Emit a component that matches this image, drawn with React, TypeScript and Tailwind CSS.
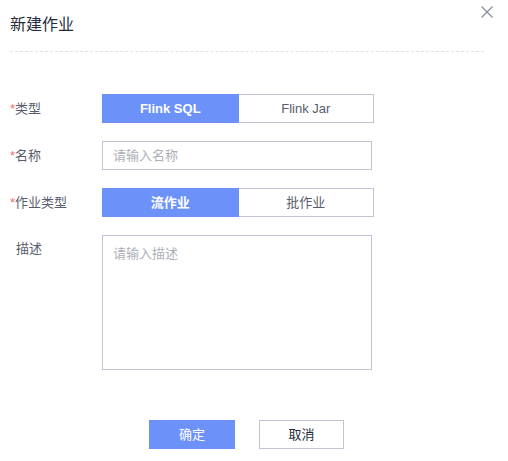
import { useState } from 'react';

const font = { fontFamily: '"Liberation Sans", "Noto Sans CJK SC", sans-serif' };

function Segmented({ options, value, onChange }: { options: string[]; value: string; onChange: (v: string) => void }) {
  return (
    <div className="flex w-[272px] h-[29px]">
      {options.map((opt, i) => {
        const active = opt === value;
        return (
          <button
            key={opt}
            onClick={() => onChange(opt)}
            className={`flex-1 flex items-center justify-center text-[13px] border ${
              active
                ? 'bg-[#6c92fa] border-[#6c92fa] text-white font-semibold'
                : 'bg-white border-[#c0c4d6] text-[#575d6c]'
            } ${i === 0 ? '' : 'border-l-0'}`}
          >
            {opt}
          </button>
        );
      })}
    </div>
  );
}

function Label({ text, required = true }: { text: string; required?: boolean }) {
  return (
    <div className="w-[92px] shrink-0 text-[13px] text-[#575d6c]">
      {required ? <span className="text-[#f66f6a]">*</span> : <span className="inline-block w-[6px]" />}
      {text}
    </div>
  );
}

export default function App() {
  const [kind, setKind] = useState('Flink SQL');
  const [jobType, setJobType] = useState('流作业');

  return (
    <div className="relative w-[508px] h-[461px] bg-white" style={font}>
      <button className="absolute left-[480px] top-[5px] w-[14px] h-[14px]" aria-label="close">
        <svg viewBox="0 0 14 14" width="14" height="14" stroke="#8a8e99" strokeWidth="1.3">
          <line x1="1.5" y1="1.5" x2="12.5" y2="12.5" />
          <line x1="12.5" y1="1.5" x2="1.5" y2="12.5" />
        </svg>
      </button>

      <div className="px-[10px]">
        <div className="pt-[13px] h-[52px] w-[474px] border-b border-dashed border-[#dfe1e6] text-[16px] text-[#252b3a]">
          新建作业
        </div>

        <div className="flex flex-col gap-[18px] pt-[42px]">
          <div className="flex items-center">
            <Label text="类型" />
            <Segmented options={['Flink SQL', 'Flink Jar']} value={kind} onChange={setKind} />
          </div>
          <div className="flex items-center">
            <Label text="名称" />
            <input
              placeholder="请输入名称"
              className="w-[270px] h-[29px] border border-[#c0c4d6] px-[10px] text-[13px] text-[#252b3a] placeholder:text-[#adb0b8] outline-none"
            />
          </div>
          <div className="flex items-center">
            <Label text="作业类型" />
            <Segmented options={['流作业', '批作业']} value={jobType} onChange={setJobType} />
          </div>
          <div className="flex items-start">
            <div className="pt-[4px]">
              <Label text="描述" required={false} />
            </div>
            <textarea
              placeholder="请输入描述"
              className="w-[270px] h-[135px] border border-[#c0c4d6] px-[10px] py-[8px] text-[13px] text-[#252b3a] placeholder:text-[#adb0b8] outline-none resize-none"
            />
          </div>
        </div>

        <div className="flex gap-[24px] pl-[139px] pt-[50px]">
          <button className="w-[86px] h-[29px] bg-[#6c92fa] text-white text-[13px]">确定</button>
          <button className="w-[85px] h-[29px] border border-[#c0c4d6] bg-white text-[#252b3a] text-[13px]">取消</button>
        </div>
      </div>
    </div>
  );
}
